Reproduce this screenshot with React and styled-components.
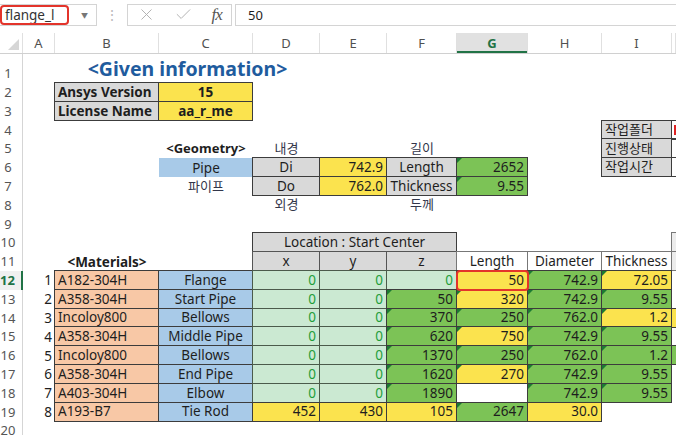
import React from 'react'
import styled, { createGlobalStyle, css } from 'styled-components'
import { X, Check } from 'lucide-react'

const YEL = '#fbe34e'
const GRN = '#7cc356'
const LGRN = '#cbe9d2'
const ORG = '#f8c8a6'
const BLU = '#a8cae8'
const GRY = '#d9d9d9'
const LINE = '#3c3c3c'
const ZERO = '#1f9e3a'

const COLS = '23px 32px 104px 94px 67px 67px 70px 71px 74px 70px 1fr'
const LETTERS = ['', 'A', 'B', 'C', 'D', 'E', 'F', 'G', 'H', 'I', '']

const GlobalStyle = createGlobalStyle`
  html, body {
    margin: 0;
    padding: 0;
    background: #fff;
  }
  body {
    width: 676px;
    height: 435px;
    overflow: hidden;
    font-family: "Noto Sans", "Noto Sans CJK KR", sans-serif;
    color: #1e1e1e;
  }
`

// ---- formula bar ----
const FormulaBar = styled.div`
  display: flex;
  align-items: center;
  height: 27px;
  padding-top: 2px;
  box-sizing: border-box;
`
const NameBox = styled.div`
  position: relative;
  display: flex;
  align-items: center;
  justify-content: space-between;
  width: 97px;
  height: 22px;
  box-sizing: border-box;
  padding: 0 8px 0 5px;
  border: 1px solid #d4d4d4;
  border-left: none;
  font-size: 13.5px;
  color: #333;
  &::after {
    content: '';
    position: absolute;
    left: 0;
    top: 0;
    width: 69px;
    height: 20px;
    box-sizing: border-box;
    border: 2px solid #e3342b;
    border-radius: 4px;
  }
`
const Caret = styled.span`
  font-size: 7px;
  color: #777;
`
const Dots = styled.span`
  width: 30px;
  text-align: center;
  color: #bbb;
  font-size: 14px;
`
const FxGroup = styled.div`
  display: flex;
  align-items: center;
  justify-content: space-around;
  width: 105px;
  height: 22px;
  box-sizing: border-box;
  border: 1px solid #d4d4d4;
  color: #b0b0b0;
`
const Fx = styled.span`
  font-family: "Liberation Serif", serif;
  font-style: italic;
  font-size: 17px;
  color: #555;
  letter-spacing: -1px;
`
const Input = styled.div`
  flex: 1;
  display: flex;
  align-items: center;
  height: 22px;
  margin-left: 3px;
  padding-left: 12px;
  box-sizing: border-box;
  border: 1px solid #d4d4d4;
  border-right: none;
  font-size: 13px;
`

// ---- sheet ----
const Sheet = styled.div`
  margin-top: 6px;
`
const Row = styled.div`
  display: grid;
  grid-template-columns: ${COLS};
  height: ${p => p.$h || 18.8}px;
`
const HeadRow = styled(Row)`
  height: 20px;
  border-bottom: 1px solid #d0d0d0;
`
const ColHead = styled.div`
  position: relative;
  display: flex;
  align-items: center;
  justify-content: center;
  font-size: 13px;
  color: #505050;
  border-right: 1px solid #e0e0e0;
  ${p => p.$active && css`
    background: #e1e1e1;
    color: #217346;
    font-weight: 700;
    box-shadow: inset 0 -2px 0 #217346;
  `}
  ${p => p.$corner && css`
    &::after {
      content: '';
      position: absolute;
      right: 3px;
      bottom: 3px;
      border-left: 11px solid transparent;
      border-bottom: 11px solid #d6d6d6;
    }
  `}
`
const RowHead = styled.div`
  grid-column: 1;
  display: flex;
  align-items: flex-end;
  justify-content: center;
  padding: 0 6px 1px 0;
  font-size: 13px;
  color: #555;
  border-right: 1px solid #d5d5d5;
  ${p => p.$active && css`
    background: #f0f0f0;
    color: #217346;
    font-weight: 700;
    border-right: 2px solid #217346;
  `}
`
const Cell = styled.div`
  grid-column: ${p => p.$col} / span ${p => p.$span || 1};
  position: relative;
  display: flex;
  align-items: center;
  justify-content: ${p => ({ left: 'flex-start', right: 'flex-end' }[p.$align] || 'center')};
  padding: 0 3px;
  box-sizing: border-box;
  min-width: 0;
  white-space: nowrap;
  line-height: 1.2;
  font-size: ${p => p.$size || 13.5}px;
  font-weight: ${p => (p.$bold ? 700 : 400)};
  color: ${p => p.$color || '#1e1e1e'};
  background: ${p => p.$bg || 'transparent'};
  ${p => p.$border && css`
    border: 1px solid ${p.$border};
    margin: -1px 0 0 -1px;
  `}
  ${p => p.$flag && css`
    &::before {
      content: '';
      position: absolute;
      left: 0;
      top: 0;
      border-top: 5px solid #1c7a33;
      border-right: 5px solid transparent;
    }
  `}
  ${p => p.$red && css`
    &::before {
      content: '';
      position: absolute;
      left: 2px;
      top: 4px;
      width: 2px;
      height: 10px;
      background: #d22;
    }
  `}
  ${p => p.$mark && css`
    z-index: 2;
    &::after {
      content: '';
      position: absolute;
      inset: -1px -2px -2px -1px;
      border: 2px solid #e3342b;
      border-radius: 4px;
    }
  `}
`

// cell helpers: c = grid column (2 = A ... 10 = I, 11 = J)
const box = (c, t, bg, o = {}) => ({ c, t, bg, bd: LINE, ...o })
const n = (c, t, bg, o = {}) => box(c, t, bg, { al: 'right', flag: bg !== LGRN && bg !== undefined, ...o })
const zero = c => box(c, '0', LGRN, { al: 'right', color: ZERO, bd: '#4b5b4b' })
const ko = (c, t) => ({ c, t, size: 13, color: '#33364a' })

const material = (i, mat, part, rest) => [
  { c: 2, t: String(i), al: 'right' },
  box(3, mat, ORG, { al: 'left' }),
  box(4, part, BLU),
  ...rest,
]

const rows = [
  { h: 29, cells: [{ c: 3, span: 3, t: '<Given information>', bold: true, size: 19.5, color: '#1f5c9e' }] },
  { cells: [box(3, 'Ansys Version', GRY, { bold: true, al: 'left' }), box(4, '15', YEL, { bold: true })] },
  { cells: [box(3, 'License Name', GRY, { bold: true, al: 'left' }), box(4, 'aa_r_me', YEL, { bold: true })] },
  { cells: [box(10, '작업폴더', GRY, { al: 'left', size: 13 }), box(11, '', undefined, { red: true })] },
  {
    cells: [
      { c: 4, t: '<Geometry>', bold: true, size: 13 },
      ko(5, '내경'),
      ko(7, '길이'),
      box(10, '진행상태', GRY, { al: 'left', size: 13 }),
      box(11, ''),
    ],
  },
  {
    cells: [
      { c: 4, t: 'Pipe', bg: BLU },
      box(5, 'Di', GRY),
      n(6, '742.9', YEL, { flag: false }),
      box(7, 'Length', GRY),
      n(8, '2652', GRN),
      box(10, '작업시간', GRY, { al: 'left', size: 13 }),
      box(11, ''),
    ],
  },
  {
    cells: [
      ko(4, '파이프'),
      box(5, 'Do', GRY),
      n(6, '762.0', YEL, { flag: false }),
      box(7, 'Thickness', GRY),
      n(8, '9.55', GRN),
    ],
  },
  { cells: [ko(5, '외경'), ko(7, '두께')] },
  { cells: [] },
  { cells: [box(5, 'Location : Start Center', GRY, { span: 3 }), box(11, '', '#ececec', { bd: '#777' })] },
  {
    cells: [
      { c: 3, t: '<Materials>', bold: true },
      box(5, 'x', GRY, { bd: '#555' }),
      box(6, 'y', GRY, { bd: '#555' }),
      box(7, 'z', GRY, { bd: '#555' }),
      box(8, 'Length', '#fff', { bd: '#777' }),
      box(9, 'Diameter', '#fff', { bd: '#777' }),
      box(10, 'Thickness', '#fff', { bd: '#777' }),
      box(11, '', '#ececec', { bd: '#777' }),
    ],
  },
  {
    active: true,
    cells: material(1, 'A182-304H', 'Flange', [
      zero(5), zero(6), zero(7),
      n(8, '50', YEL, { flag: false, mark: true }),
      n(9, '742.9', GRN), n(10, '72.05', YEL),
    ]),
  },
  {
    cells: material(2, 'A358-304H', 'Start Pipe', [
      zero(5), zero(6),
      n(7, '50', GRN), n(8, '320', YEL), n(9, '742.9', GRN), n(10, '9.55', GRN),
    ]),
  },
  {
    cells: material(3, 'Incoloy800', 'Bellows', [
      zero(5), zero(6),
      n(7, '370', GRN), n(8, '250', GRN), n(9, '762.0', GRN), n(10, '1.2', YEL),
      box(11, '', YEL),
    ]),
  },
  {
    cells: material(4, 'A358-304H', 'Middle Pipe', [
      zero(5), zero(6),
      n(7, '620', GRN), n(8, '750', YEL), n(9, '742.9', GRN), n(10, '9.55', GRN),
    ]),
  },
  {
    cells: material(5, 'Incoloy800', 'Bellows', [
      zero(5), zero(6),
      n(7, '1370', GRN), n(8, '250', GRN), n(9, '762.0', GRN), n(10, '1.2', GRN),
      box(11, '', GRN),
    ]),
  },
  {
    cells: material(6, 'A358-304H', 'End Pipe', [
      zero(5), zero(6),
      n(7, '1620', GRN), n(8, '270', YEL), n(9, '742.9', GRN), n(10, '9.55', GRN),
    ]),
  },
  {
    cells: material(7, 'A403-304H', 'Elbow', [
      zero(5), zero(6),
      n(7, '1890', GRN), box(8, '', '#fff'), n(9, '742.9', GRN), n(10, '9.55', GRN),
    ]),
  },
  {
    cells: material(8, 'A193-B7', 'Tie Rod', [
      n(5, '452', YEL, { flag: false }),
      n(6, '430', YEL, { flag: false }),
      n(7, '105', YEL, { flag: false }),
      n(8, '2647', GRN),
      n(9, '30.0', YEL, { flag: false }),
    ]),
  },
  { cells: [] },
]

export default function App() {
  return (
    <>
      <GlobalStyle />
      <FormulaBar>
        <NameBox>
          flange_l
          <Caret>▼</Caret>
        </NameBox>
        <Dots>⋮</Dots>
        <FxGroup>
          <X size={19} strokeWidth={1.2} />
          <Check size={19} strokeWidth={1.2} />
          <Fx>fx</Fx>
        </FxGroup>
        <Input>50</Input>
      </FormulaBar>
      <Sheet>
        <HeadRow>
          {LETTERS.map((l, i) => (
            <ColHead key={i} $corner={i === 0} $active={l === 'G'}>
              {l}
            </ColHead>
          ))}
        </HeadRow>
        {rows.map((r, i) => (
          <Row key={i} $h={r.h}>
            <RowHead $active={r.active}>{i + 1}</RowHead>
            {r.cells.map((c, j) => (
              <Cell
                key={j}
                $col={c.c}
                $span={c.span}
                $align={c.al}
                $bg={c.bg}
                $border={c.bd}
                $bold={c.bold}
                $size={c.size}
                $color={c.color}
                $flag={c.flag}
                $red={c.red}
                $mark={c.mark}
              >
                {c.t}
              </Cell>
            ))}
          </Row>
        ))}
      </Sheet>
    </>
  )
}
